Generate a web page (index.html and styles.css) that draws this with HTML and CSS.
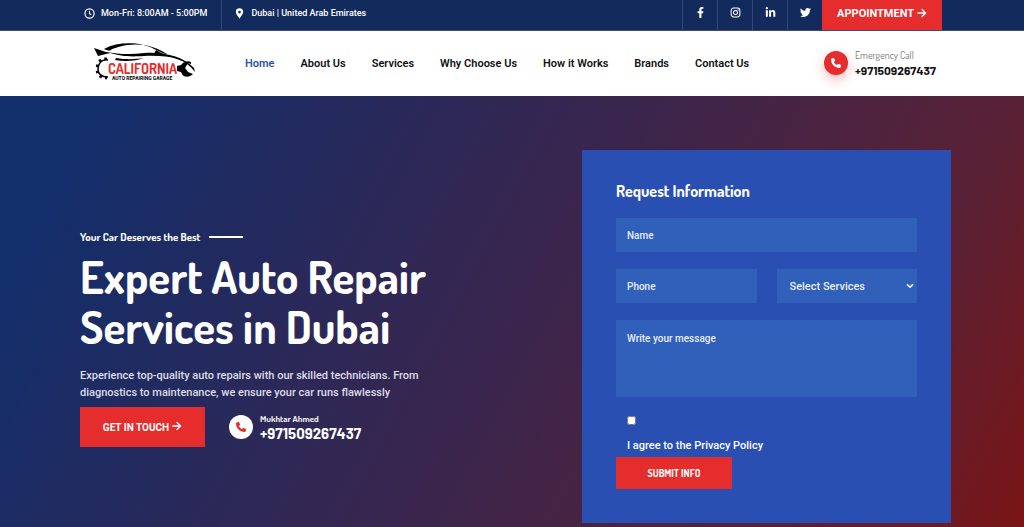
FILE: index.html
```html
<!DOCTYPE html>
<html lang="en">
<head>
<meta charset="utf-8">
<meta name="viewport" content="width=device-width, initial-scale=1">
<title>California Auto Repairing Garage</title>
<link rel="stylesheet" href="styles.css">
</head>
<body>
<svg class="sprite" aria-hidden="true">
  <symbol id="phone" viewBox="0 0 512 512"><path d="M164.900 24.600c-7.700-18.600-28-28.500-47.400-23.200l-88 24C12.100 30.200 0 46 0 64c0 247.400 200.600 448 448 448 18 0 33.800-12.100 38.600-29.500l24-88c5.300-19.400-4.600-39.700-23.200-47.400l-96-40c-16.300-6.800-35.200-2.100-46.300 11.600L304.700 368C234.300 334.700 177.300 277.700 144 207.300l49.300-40.300c13.700-11.200 18.400-30 11.600-46.300z"/></symbol>
  <symbol id="arrow" viewBox="0 0 12 12"><path d="M1 6h9M6 1.800 10.300 6 6 10.200" fill="none" stroke="currentColor" stroke-width="1.700" stroke-linecap="round" stroke-linejoin="round"/></symbol>
</svg>
<div class="topbar">
  <div class="facts">
    <span class="fact"><svg class="icon" viewBox="0 0 12 12"><circle cx="6" cy="6" r="5" fill="none" stroke="currentColor" stroke-width="1.300"/><path d="M6 3v3.200l2 1.300" fill="none" stroke="currentColor" stroke-width="1.200"/></svg>Mon-Fri: 8:00AM - 5:00PM</span>
    <span class="fact"><svg class="icon" viewBox="0 0 12 12"><path fill-rule="evenodd" d="M6 .4a4 4 0 0 0-4 4c0 2.300 2.300 4.400 4 7.200 1.700-2.800 4-4.900 4-7.200a4 4 0 0 0-4-4zm0 2.500a1.500 1.500 0 1 1 0 3 1.500 1.500 0 0 1 0-3z"/></svg>Dubai | United Arab Emirates</span>
  </div>
  <div class="social">
    <a href="#" aria-label="Facebook"><svg class="icon" viewBox="0 0 320 512"><path d="m279 288 14-93h-89v-60c0-25 12-50 52-50h41V7s-37-7-72-7c-73 0-121 44-121 125v70H23v93h81v224h100V288z"/></svg></a>
    <a href="#" aria-label="Instagram"><svg class="icon" viewBox="0 0 12 12"><g fill="none" stroke="currentColor" stroke-width="1.100"><rect x="1.200" y="1.200" width="9.600" height="9.600" rx="2.800"/><circle cx="6" cy="6" r="2.200"/></g><circle cx="8.800" cy="3.200" r=".7"/></svg></a>
    <a href="#" aria-label="LinkedIn"><svg class="icon" viewBox="0 0 448 512"><path d="M100 448H7V149h93zM54 108a54 54 0 1 1 0-108 54 54 0 0 1 0 108zm394 340h-93V302c0-35-1-79-48-79-49 0-56 38-56 77v148h-93V149h89v41h1c12-24 43-48 88-48 94 0 112 62 112 142z"/></svg></a>
    <a href="#" aria-label="Twitter"><svg class="icon" viewBox="0 0 512 512"><path d="M459 152c1 4 1 9 1 13 0 139-106 299-299 299-59 0-115-17-161-47 8 1 16 1 25 1 49 0 94-17 130-45-46-1-85-31-98-73 6 1 13 2 20 2 9 0 19-2 28-4-48-10-84-52-84-103v-1c14 8 30 13 47 13a105 105 0 0 1-32-140c51 64 129 105 216 110a105 105 0 0 1 179-96c24-5 46-14 67-26-8 24-25 45-46 58 21-3 42-8 60-16-14 21-32 39-53 55z"/></svg></a>
    <a class="appointment" href="#request">APPOINTMENT <svg class="arrow"><use href="#arrow"/></svg></a>
  </div>
</div>
<header class="header">
  <a class="brand" href="#" aria-label="California Auto Repairing Garage">
    <svg class="logo" viewBox="0 0 102 40">
      <path d="M10 6C25-2 47-1 60 6c7 3 10 5 13 5-6-4-13-7-22-9C33 0 24 4 18 6c-2 2-3 2-8 0z"/>
      <path d="M0 5l12 4c11 2 25 3 38 1 19-1 39 3 50 15l1 4c-10-14-27-17-51-16-16 1-23 0-34-3L4 13z"/>
      <path d="M22 15c12 2 20 1 28 0-8 3-19 4-29 2zM60 11l2-4 7 4z"/>
      <path d="M14 17C7 16 4 21 4 26s3 8 10 8" fill="none" stroke="#000" stroke-width="1.500"/>
      <path d="M13 16C6 15 3 20 3 26s3 9 10 9" fill="none" stroke="#000" stroke-width="2.600" stroke-dasharray="2.500 3.500"/>
      <path d="M97 19a8 8 0 0 0-10 3l-4 1v5l4 1c2 6 8 6 12 2l-5-2-3-4 3-5 3 1z"/>
      <text class="logo-name" x="14" y="31">CALIFORNIA</text>
      <text class="logo-sub" x="18" y="37">AUTO REPAIRING GARAGE</text>
    </svg>
  </a>
  <nav class="nav">
    <a class="active" href="#">Home</a><a href="#">About Us</a><a href="#">Services</a><a href="#">Why Choose Us</a><a href="#">How it Works</a><a href="#">Brands</a><a href="#">Contact Us</a>
  </nav>
  <a class="call" href="tel:+971509267437">
    <span class="disc"><svg class="phone"><use href="#phone"/></svg></span>
    <span class="call-text"><span class="call-label">Emergency Call</span><strong class="call-number">+971509267437</strong></span>
  </a>
</header>
<main class="hero">
  <section class="intro">
    <p class="tagline">Your Car Deserves the Best</p>
    <h1>Expert Auto Repair<br>Services in Dubai</h1>
    <p class="lead">Experience top-quality auto repairs with our skilled technicians. From diagnostics to maintenance, we ensure your car runs flawlessly</p>
    <div class="actions">
      <a class="touch" href="#request">GET IN TOUCH <svg class="arrow"><use href="#arrow"/></svg></a>
      <a class="call call-light" href="tel:+971509267437">
        <span class="disc"><svg class="phone"><use href="#phone"/></svg></span>
        <span class="call-text"><span class="call-label">Mukhtar Ahmed</span><strong class="call-number">+971509267437</strong></span>
      </a>
    </div>
  </section>
  <form class="request" id="request">
    <h2>Request Information</h2>
    <input class="field" type="text" placeholder="Name" aria-label="Name">
    <div class="pair">
      <input class="field" type="tel" placeholder="Phone" aria-label="Phone">
      <div class="select-wrap">
        <select class="field select" aria-label="Select Services"><option>Select Services</option></select>
        <svg class="chevron" viewBox="0 0 8 6"><path d="m1 1.200 3 3 3-3" fill="none" stroke="currentColor" stroke-width="1.600"/></svg>
      </div>
    </div>
    <textarea class="field message" placeholder="Write your message" aria-label="Write your message"></textarea>
    <div class="consent">
      <input class="check" type="checkbox" id="agree">
      <label for="agree">I agree to the Privacy Policy</label>
    </div>
    <button class="submit" type="submit">SUBMIT INFO</button>
  </form>
</main>
</body>
</html>
```
FILE: styles.css
```css
:root {
  --body: Roboto, "Liberation Sans", sans-serif;
  --display: "Dosis", Roboto, sans-serif;
  --number: "Barlow", "Dosis", Roboto, sans-serif;
  --red: #e52d2d;
  --navy: #132a5c;
}
* { box-sizing: border-box; }
body {
  margin: 0;
  min-height: 100vh;
  display: flex;
  flex-direction: column;
  font-family: var(--body);
  font-size: 11px;
  font-weight: 500;
  color: #fff;
}
a { color: inherit; text-decoration: none; }
h1, h2, p { margin: 0; }
svg { fill: currentColor; flex: none; }
.sprite { display: none; }
.arrow { width: 10px; height: 10px; margin-bottom: 2px; }
.phone { width: 10px; height: 10px; }

.topbar {
  display: flex;
  justify-content: space-between;
  height: 31px;
  padding: 0 8% 0 84px;
  background: var(--navy);
  border-bottom: 1px solid #3b4d77;
}
.facts, .social { display: flex; }
.fact {
  display: flex;
  align-items: center;
  gap: 6px;
  padding-bottom: 4px;
  font-size: 9px;
}
.fact + .fact {
  margin-left: 14px;
  padding-left: 12px;
  border-left: 1px solid #33477a;
}
.icon { width: 11px; height: 11px; }
.social a {
  display: flex;
  align-items: center;
  justify-content: center;
  width: 35px;
  padding-bottom: 6px;
  border-left: 1px solid #33477a;
}
.social .appointment {
  width: 120px;
  gap: 3px;
  padding-bottom: 3px;
  background: var(--red);
  border: 0;
  font-size: 11px;
  font-weight: 700;
}

.header {
  display: flex;
  align-items: center;
  height: 65px;
  padding: 0 88px 2px 94px;
  background: #fff;
  color: #111;
}
.brand { display: flex; }
.logo { width: 102px; height: 40px; color: #000; }
.logo-name { font: 700 14px var(--display); fill: var(--red); }
.logo-sub { font: 700 5px Roboto, sans-serif; }
.nav {
  display: flex;
  flex: 1;
  gap: 26px;
  margin-left: 49px;
  padding-top: 2px;
  font-size: 11px;
  font-weight: 600;
}
.active { color: #2c55a8; }
.call { display: flex; align-items: center; gap: 7px; }
.disc {
  display: grid;
  place-items: center;
  width: 24px;
  height: 24px;
  border-radius: 50%;
  background: var(--red);
  color: #fff;
  box-shadow: 0 5px 12px rgba(229, 45, 45, .3);
}
.call-text { display: flex; flex-direction: column; }
.call-label {
  font: 400 10px/14px var(--display);
  color: #777;
}
.call-number { font: 700 12px/16px var(--number); }
.call-light .disc { background: #fff; color: var(--red); box-shadow: none; }
.call-light .call-label { font-weight: 700; font-size: 9px; line-height: 12px; color: #eee; }
.call-light .call-number { font-size: 15px; line-height: 16px; }

.hero {
  flex: 1;
  display: grid;
  grid-template-columns: minmax(0, 502fr) minmax(0, 369fr);
  align-items: start;
  padding: 54px 73px 4px 80px;
  background: linear-gradient(118deg, #122e6b 8%, #3b254c 52%, #5a2135 82%, #7a1414 100%);
}
.intro { padding-top: 78px; }
.tagline {
  display: flex;
  align-items: center;
  gap: 9px;
  font: 700 11px/18px var(--display);
}
.tagline::after { content: ""; width: 34px; height: 2px; background: #fff; }
h1 {
  margin-top: 6px;
  font: 700 45px/50px var(--display);
}
.lead {
  max-width: 350px;
  margin-top: 15px;
  line-height: 17px;
  color: #dedde8;
}
.actions { display: flex; align-items: center; gap: 24px; margin-top: 6px; }
.touch {
  display: flex;
  align-items: center;
  justify-content: center;
  gap: 3px;
  width: 125px;
  height: 40px;
  background: var(--red);
  font-size: 10px;
  font-weight: 700;
}

.request {
  display: flex;
  flex-direction: column;
  gap: 17px;
  padding: 31px 34px 34px;
  background: #294fb2;
}
h2 { font: 700 16px/20px var(--display); }
.field {
  width: 100%;
  height: 34px;
  padding: 0 11px;
  border: 0;
  border-radius: 0;
  background: #3160ba;
  color: #fff;
  font: 500 10px var(--body);
}
.field::placeholder { color: #e8edf8; opacity: 1; }
.pair { display: grid; grid-template-columns: 1fr 1fr; gap: 20px; }
.select-wrap { position: relative; }
.select { appearance: none; padding: 0 13px; font-size: 11px; color: #e8edf8; }
.chevron {
  position: absolute;
  top: 14px;
  right: 3px;
  width: 8px;
  height: 6px;
  pointer-events: none;
}
.message { display: block; height: 77px; padding-top: 13px; resize: none; }
.consent {
  display: flex;
  flex-direction: column;
  align-items: flex-start;
  gap: 13px;
  padding: 2px 11px 0;
  line-height: 16px;
}
.check { width: 9px; height: 9px; margin: 0; }
.submit {
  align-self: flex-start;
  width: 116px;
  height: 32px;
  margin-top: -14px;
  padding: 0;
  border: 0;
  background: var(--red);
  color: #fff;
  font: 700 10px var(--display);
}
```
